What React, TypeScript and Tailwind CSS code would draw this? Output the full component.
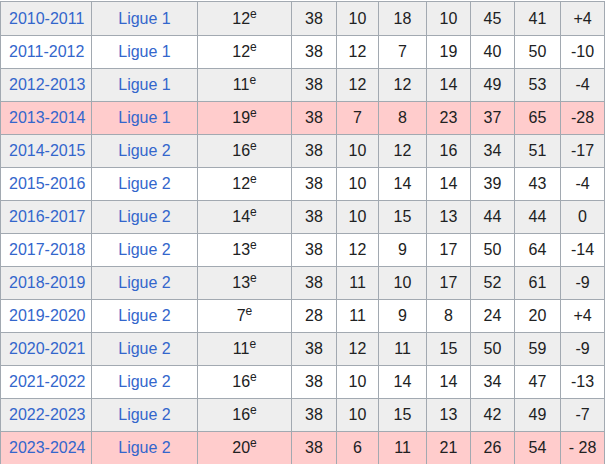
const rows: [string, string, string, string, string, string, string, string, string, string, string][] = [
  ["2010-2011", "Ligue 1", "12", "38", "10", "18", "10", "45", "41", "+4", "gray"],
  ["2011-2012", "Ligue 1", "12", "38", "12", "7", "19", "40", "50", "-10", "white"],
  ["2012-2013", "Ligue 1", "11", "38", "12", "12", "14", "49", "53", "-4", "gray"],
  ["2013-2014", "Ligue 1", "19", "38", "7", "8", "23", "37", "65", "-28", "red"],
  ["2014-2015", "Ligue 2", "16", "38", "10", "12", "16", "34", "51", "-17", "gray"],
  ["2015-2016", "Ligue 2", "12", "38", "10", "14", "14", "39", "43", "-4", "white"],
  ["2016-2017", "Ligue 2", "14", "38", "10", "15", "13", "44", "44", "0", "gray"],
  ["2017-2018", "Ligue 2", "13", "38", "12", "9", "17", "50", "64", "-14", "white"],
  ["2018-2019", "Ligue 2", "13", "38", "11", "10", "17", "52", "61", "-9", "gray"],
  ["2019-2020", "Ligue 2", "7", "28", "11", "9", "8", "24", "20", "+4", "white"],
  ["2020-2021", "Ligue 2", "11", "38", "12", "11", "15", "50", "59", "-9", "gray"],
  ["2021-2022", "Ligue 2", "16", "38", "10", "14", "14", "34", "47", "-13", "white"],
  ["2022-2023", "Ligue 2", "16", "38", "10", "15", "13", "42", "49", "-7", "gray"],
  ["2023-2024", "Ligue 2", "20", "38", "6", "11", "21", "26", "54", "- 28", "red"],
];

// largeur de chaque cellule, bordure gauche comprise
const numWidths = ["w-[45px]", "w-[42px]", "w-[48px]", "w-[44px]", "w-[44px]", "w-[46px]", "w-[44px]"];

const bgFor = (kind: string) =>
  kind === "red" ? "bg-[#ffcccc]" : kind === "gray" ? "bg-[#eeeeee]" : "bg-white";

export default function App() {
  return (
    <div
      className="min-h-screen w-[608px] bg-white pt-[1px] text-[16px] text-[#202122]"
      style={{ fontFamily: '"Liberation Sans", Arial, sans-serif' }}
    >
      <div className="w-[605px]">
        {rows.map((r, i) => (
          <div
            key={r[0]}
            className={`flex border-r border-b border-[#a2a9b1] ${bgFor(r[10])} ${
              i === 0 ? "h-[35px] border-t" : "h-[33px]"
            }`}
          >
            <div className="flex w-[91px] items-center border-l border-[#a2a9b1] pl-[8px] text-[#3366cc]">
              {r[0]}
            </div>
            <div className="flex w-[106px] items-center justify-center border-l border-[#a2a9b1] text-[#3366cc]">
              {r[1]}
            </div>
            <div className="flex w-[94px] items-center justify-center border-l border-[#a2a9b1]">
              <span>
                {r[2]}
                <sup className="relative -top-[6px] text-[12px]">e</sup>
              </span>
            </div>
            {r.slice(3, 10).map((v, j) => (
              <div
                key={j}
                className={`flex ${numWidths[j]} items-center justify-center border-l border-[#a2a9b1]`}
              >
                {v}
              </div>
            ))}
          </div>
        ))}
      </div>
    </div>
  );
}
